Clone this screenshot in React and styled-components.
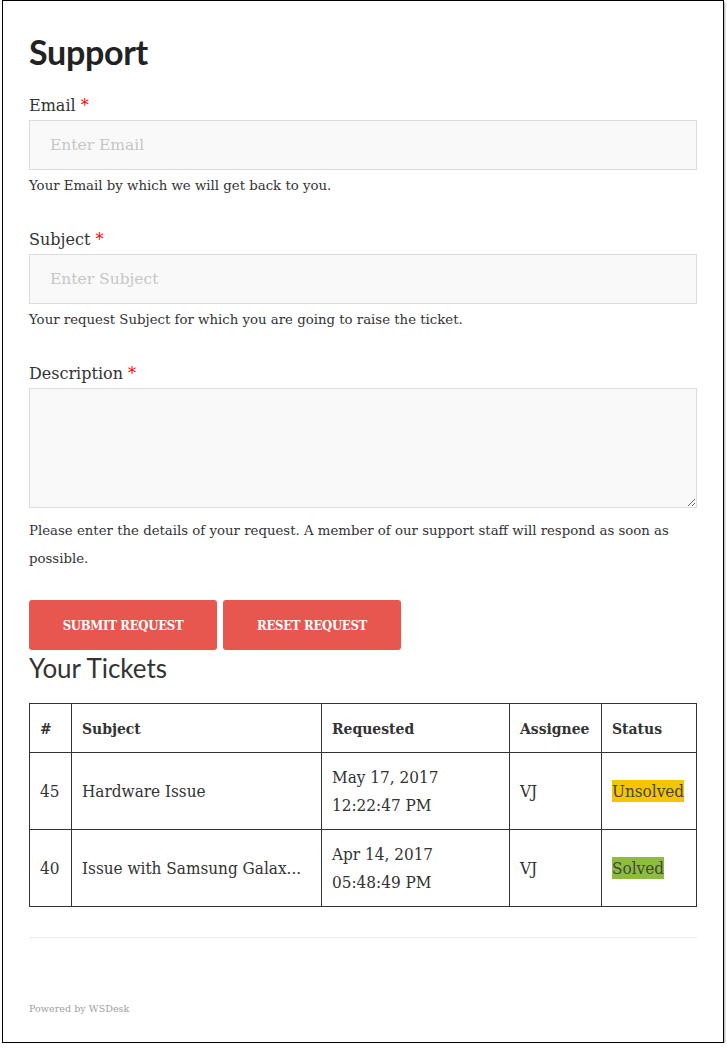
import React from "react";
import styled, { createGlobalStyle } from "styled-components";

const Global = createGlobalStyle`
  body {
    margin: 0;
    background: #fff;
    font-family: "DejaVu Serif", "Liberation Serif", serif;
    color: #333;
  }
`;

const Frame = styled.div`
  box-sizing: border-box;
  margin-left: 2px;
  width: 722px;
  height: 1043px;
  border: 1px solid #000;
  box-shadow: 1px 2px 2px rgba(0, 0, 0, 0.35);
  padding: 30px 26px 0 26px;
  background: #fff;
`;

const Title = styled.h1`
  margin: 0 0 23px 0;
  font-family: Lato, "Open Sans", sans-serif;
  font-weight: 700;
  font-size: 34px;
  line-height: 42px;
  color: #222;
  letter-spacing: -0.3px;
`;

const Field = styled.div`
  margin-bottom: ${(p) => p.gap || 30}px;
`;

const Label = styled.label`
  display: block;
  font-size: 16px;
  line-height: 20px;
  color: #333;
  margin-bottom: 4px;
`;

const Star = styled.span`
  color: #f00;
`;

const Input = styled.input`
  display: block;
  box-sizing: border-box;
  width: 100%;
  height: 50px;
  border: 1px solid #dcdcdc;
  background: #f9f9f9;
  padding: 0 20px;
  font-family: "DejaVu Serif", serif;
  font-size: 15.5px;
  color: #333;
  outline: none;
  &::placeholder {
    color: #c6c6c6;
  }
`;

const TextArea = styled.textarea`
  display: block;
  box-sizing: border-box;
  width: 100%;
  height: 120px;
  border: 1px solid #dcdcdc;
  background: #f9f9f9;
  font-family: "DejaVu Serif", serif;
  font-size: 16px;
  resize: vertical;
  outline: none;
`;

const Help = styled.p`
  margin: ${(p) => p.top || 2}px 0 0 0;
  font-size: 13.3px;
  line-height: 28px;
  color: #333;
`;

const Buttons = styled.div`
  display: flex;
  gap: 6px;
`;

const Button = styled.button`
  height: 50px;
  width: ${(p) => p.w}px;
  border: none;
  border-radius: 3px;
  background: #e8574f;
  color: #fff;
  font-family: "DejaVu Serif Condensed", "DejaVu Serif", serif;
  font-weight: 700;
  font-size: 13px;
  text-transform: uppercase;
  letter-spacing: -0.3px;
  cursor: pointer;
`;

const SubTitle = styled.h2`
  margin: 2px 0 19px 0;
  font-family: Lato, "Open Sans", sans-serif;
  font-weight: 400;
  font-size: 26px;
  line-height: 32px;
  color: #333;
`;

const Table = styled.table`
  width: 100%;
  table-layout: fixed;
  border-collapse: collapse;
  font-family: "DejaVu Serif Condensed", "DejaVu Serif", serif;
  color: #333;
`;

const Th = styled.th`
  box-sizing: border-box;
  border: 1px solid #333;
  text-align: left;
  padding: 0 10px;
  height: 49px;
  font-size: 15.5px;
  font-weight: 700;
  width: ${(p) => p.w || "auto"};
`;

const Td = styled.td`
  border: 1px solid #333;
  padding: 0 10px;
  height: 76px;
  font-size: 17px;
  line-height: 28px;
  white-space: nowrap;
  overflow: hidden;
`;

const Badge = styled.span`
  background: ${(p) => (p.$solved ? "#8cbd3f" : "#f5c500")};
  color: #444;
  padding: 1px 0;
`;

const Rule = styled.hr`
  border: none;
  border-top: 1px solid #ececec;
  margin: 30px 0 0 0;
`;

const Footer = styled.div`
  margin-top: 65px;
  font-size: 9.6px;
  color: #a0a0a0;
`;

const tickets = [
  { id: 45, subject: "Hardware Issue", date: "May 17, 2017", time: "12:22:47 PM", who: "VJ", status: "Unsolved" },
  { id: 40, subject: "Issue with Samsung Galax...", date: "Apr 14, 2017", time: "05:48:49 PM", who: "VJ", status: "Solved" },
];

export default function App() {
  return (
    <>
      <Global />
      <Frame>
        <Title>Support</Title>
        <Field>
          <Label>
            Email <Star>*</Star>
          </Label>
          <Input placeholder="Enter Email" />
          <Help>Your Email by which we will get back to you.</Help>
        </Field>
        <Field>
          <Label>
            Subject <Star>*</Star>
          </Label>
          <Input placeholder="Enter Subject" />
          <Help>Your request Subject for which you are going to raise the ticket.</Help>
        </Field>
        <Field gap={27}>
          <Label>
            Description <Star>*</Star>
          </Label>
          <TextArea />
          <Help top={9}>
            Please enter the details of your request. A member of our support staff will respond as soon as
            possible.
          </Help>
        </Field>
        <Buttons>
          <Button w={188}>Submit Request</Button>
          <Button w={178}>Reset Request</Button>
        </Buttons>
        <SubTitle>Your Tickets</SubTitle>
        <Table>
          <thead>
            <tr>
              <Th w="42px">#</Th>
              <Th w="250px">Subject</Th>
              <Th w="188px">Requested</Th>
              <Th w="92px">Assignee</Th>
              <Th>Status</Th>
            </tr>
          </thead>
          <tbody>
            {tickets.map((t) => (
              <tr key={t.id}>
                <Td>{t.id}</Td>
                <Td>{t.subject}</Td>
                <Td>
                  {t.date}
                  <br />
                  {t.time}
                </Td>
                <Td>{t.who}</Td>
                <Td>
                  <Badge $solved={t.status === "Solved"}>{t.status}</Badge>
                </Td>
              </tr>
            ))}
          </tbody>
        </Table>
        <Rule />
        <Footer>Powered by WSDesk</Footer>
      </Frame>
    </>
  );
}
